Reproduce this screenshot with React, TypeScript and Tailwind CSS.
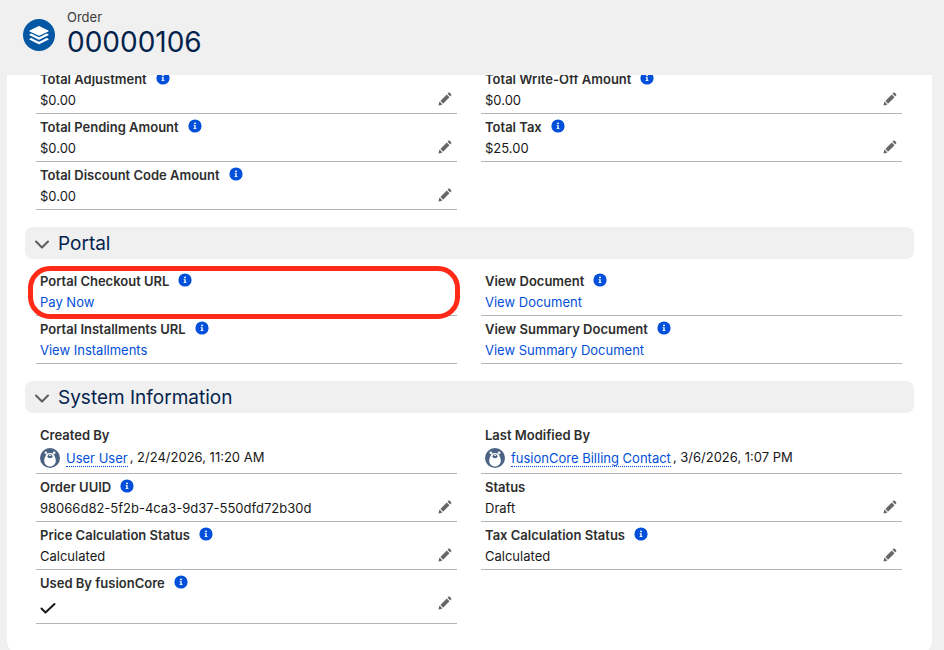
import type { ReactNode } from "react";
import { twMerge } from "tailwind-merge";

interface FieldProps {
	label: string;
	info?: boolean;
	editable?: boolean;
	className?: string;
	children: ReactNode;
}

function InfoIcon() {
	return (
		<svg viewBox="0 0 14 14" className="h-3.5 w-3.5" aria-hidden="true">
			<circle cx="7" cy="7" r="6.6" fill="#0250d9" />
			<circle cx="7" cy="4.4" r="0.95" fill="#fff" />
			<path d="M5.6 6.2h2.1v3h0.8v0.9h-3v-0.9h0.8v-2.1h-0.7z" fill="#fff" />
		</svg>
	);
}

function PencilIcon() {
	return (
		<svg viewBox="0 0 52 52" className="h-3.5 w-3.5" fill="#666" aria-hidden="true">
			<path d="M9.5 33.4l8.9 8.9c.4.4 1 .4 1.4 0L42 20c.4-.4.4-1 0-1.4l-8.8-8.8c-.4-.4-1-.4-1.4 0L9.5 32.1c-.4.4-.4 1 0 1.3z" />
			<path d="M36.1 5.7c-.4.4-.4 1 0 1.4l8.8 8.8c.4.4 1 .4 1.4 0l2.5-2.5c1.6-1.5 1.6-3.9 0-5.5l-4.7-4.7c-1.6-1.6-4.1-1.6-5.7 0l-2.3 2.5z" />
			<path d="M2.1 48.2c-.2 1 .7 1.9 1.7 1.7l10.9-2.6c.4-.1.7-.3.9-.5l.2-.2c.2-.2.3-.9-.1-1.3l-9-9c-.4-.4-1.1-.3-1.3-.1l-.2.2c-.3.3-.4.6-.5.9L2.1 48.2z" />
		</svg>
	);
}

function OrderIcon() {
	return (
		<svg viewBox="0 0 32 32" className="h-8 w-8" aria-hidden="true">
			<circle cx="16" cy="16" r="16" fill="#0457a3" />
			<g fill="#fff">
				<path d="M15.3 7.2a1.6 1.6 0 0 1 1.4 0l8.6 4.2q.9.5 0 1l-8.6 4.1a1.6 1.6 0 0 1-1.4 0l-8.6-4.1q-.9-.5 0-1z" />
				<path d="M6.7 15.3l1.6-.8 6.4 3.2a3 3 0 0 0 2.6 0l6.4-3.2 1.6.8q.9.5 0 1l-8.6 4.2a1.6 1.6 0 0 1-1.4 0l-8.6-4.2q-.9-.5 0-1z" />
				<path d="M6.7 19.8l1.6-.8 6.4 3.2a3 3 0 0 0 2.6 0l6.4-3.2 1.6.8q.9.5 0 1l-8.6 4.2a1.6 1.6 0 0 1-1.4 0l-8.6-4.2q-.9-.5 0-1z" />
			</g>
		</svg>
	);
}

function Avatar() {
	return (
		<svg viewBox="0 0 20 20" className="h-5 w-5 shrink-0" aria-hidden="true">
			<circle cx="10" cy="10" r="10" fill="#4b6283" />
			<g fill="#fff">
				<circle cx="5.8" cy="4.7" r="1.3" />
				<circle cx="14.2" cy="4.7" r="1.3" />
				<path d="M10 5c2.4 0 3.9.8 4.3 2.5.3 1.3 1.5 2.7 1.5 5 0 3.5-2.500 6-5.800 6s-5.800-2.500-5.800-6c0-2.300 1.200-3.700 1.500-5C6.100 5.800 7.600 5 10 5z" />
			</g>
			<ellipse cx="10" cy="8.2" rx="2.5" ry="2" fill="#4b6283" />
			<ellipse cx="10" cy="7.5" rx="1.2" ry="0.6" fill="#fff" />
		</svg>
	);
}

function Field({ label, info, editable, className, children }: FieldProps) {
	return (
		<div className={twMerge("flex border-b border-[#b5b5b5] px-1 pt-1 pb-[3px]", className)}>
			<div className="min-w-0 flex-1">
				<dt className="flex h-[18px] items-center gap-[9px] font-semibold text-[#2e2e2e]">
					{label}
					{info && (
						<button type="button" aria-label={`Help for ${label}`} className="-mt-0.5">
							<InfoIcon />
						</button>
					)}
				</dt>
				<dd className="mt-0.5 flex min-h-5 items-center text-[#181818]">{children}</dd>
			</div>
			{editable && (
				<button type="button" aria-label={`Edit ${label}`} className="mt-[22px] mr-px self-start">
					<PencilIcon />
				</button>
			)}
		</div>
	);
}

function Section({ title, children }: { title: string; children: ReactNode }) {
	return (
		<section className="mt-[17px]">
			<h2>
				<button
					type="button"
					aria-expanded="true"
					className="flex h-8 w-full items-center gap-[9px] rounded-lg bg-[#f0f0f0] pt-0.5 pl-2.5 text-left text-[19px] text-[#03234d]"
				>
					<svg viewBox="0 0 14 14" className="mt-0.5 h-3.5 w-3.5" fill="none" aria-hidden="true">
						<path d="M1 3.5l6 6 6-6" stroke="#5c5c5c" strokeWidth="2" strokeLinecap="round" strokeLinejoin="round" />
					</svg>
					{title}
				</button>
			</h2>
			<div className="mt-[9px]">{children}</div>
		</section>
	);
}

function FieldGrid({ children }: { children: ReactNode }) {
	return <dl className="mr-3 ml-[11px] grid grid-cols-2 gap-x-6">{children}</dl>;
}

function TextLink({ children }: { children: ReactNode }) {
	return (
		<a href="#" className="text-[#0250d9]">
			{children}
		</a>
	);
}

function UserStamp({ name, date }: { name: string; date: string }) {
	return (
		<div className="flex h-6 items-center">
			<Avatar />
			<a href="#" className="ml-1.5 border-b border-dotted border-[#0250d9] leading-4 text-[#0250d9]">
				{name}
			</a>
			<span className="mb-0.5 ml-0.5">, {date}</span>
		</div>
	);
}

export default function App() {
	return (
		<div className="h-screen overflow-hidden bg-[#f0f0f0] font-['Inter',sans-serif] text-[13px] leading-[18px]">
			<header className="relative z-10 flex h-[75px] items-start bg-[#f0f0f0] pt-2 pl-[23px]">
				<div className="mt-[11px]">
					<OrderIcon />
				</div>
				<h1 className="ml-3">
					<span className="block text-[#3a3a3a]">Order</span>
					<span className="block text-[28px] leading-8 text-[#03234d]">00000106</span>
				</h1>
			</header>

			{/* the card is scrolled partly under the header */}
			<main className="-mt-[29px] mr-3 ml-[7px] rounded-2xl bg-white px-[18px] pt-5 pb-8">
				<FieldGrid>
					<Field label="Total Adjustment" info editable>
						$0.00
					</Field>
					<Field label="Total Write-Off Amount" info editable>
						$0.00
					</Field>
					<Field label="Total Pending Amount" info editable>
						$0.00
					</Field>
					<Field label="Total Tax" info editable>
						$25.00
					</Field>
					<Field label="Total Discount Code Amount" info editable>
						$0.00
					</Field>
				</FieldGrid>

				<Section title="Portal">
					<FieldGrid>
						<div className="relative">
							<Field label="Portal Checkout URL" info>
								<TextLink>Pay Now</TextLink>
							</Field>
							<div className="pointer-events-none absolute -top-0.5 -right-[3px] -bottom-[3px] -left-2 rounded-[22px] border-5 border-[#ff2a17]" />
						</div>
						<Field label="View Document" info>
							<TextLink>View Document</TextLink>
						</Field>
						<Field label="Portal Installments URL" info>
							<TextLink>View Installments</TextLink>
						</Field>
						<Field label="View Summary Document" info>
							<TextLink>View Summary Document</TextLink>
						</Field>
					</FieldGrid>
				</Section>

				<Section title="System Information">
					<FieldGrid>
						<Field label="Created By" className="h-[52px]">
							<UserStamp name="User User" date="2/24/2026, 11:20 AM" />
						</Field>
						<Field label="Last Modified By" className="h-[52px]">
							<UserStamp name="fusionCore Billing Contact" date="3/6/2026, 1:07 PM" />
						</Field>
						<Field label="Order UUID" info editable>
							98066d82-5f2b-4ca3-9d37-550dfd72b30d
						</Field>
						<Field label="Status" editable>
							Draft
						</Field>
						<Field label="Price Calculation Status" info editable>
							Calculated
						</Field>
						<Field label="Tax Calculation Status" info editable>
							Calculated
						</Field>
						<Field label="Used By fusionCore" info editable className="h-[54px]">
							<svg viewBox="0 0 16 16" className="mt-1.5 h-4 w-4" fill="none" role="img" aria-label="True">
								<path d="M1.5 8.5l4 4 9-8.500" stroke="#181818" strokeWidth="2" strokeLinecap="round" strokeLinejoin="round" />
							</svg>
						</Field>
					</FieldGrid>
				</Section>
			</main>
		</div>
	);
}
